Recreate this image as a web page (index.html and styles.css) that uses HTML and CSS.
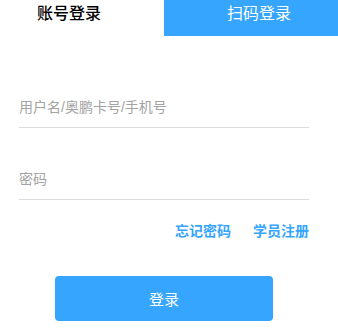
FILE: index.html
```html
<!DOCTYPE html>
<html lang="zh-CN">

<head>
  <meta charset="UTF-8">
  <meta name="viewport" content="width=device-width, initial-scale=1.0">
  <link rel="stylesheet" href="styles.css">
</head>

<body>
  <main class="login">
    <nav class="tabs">
      <a class="tabs__item tabs__item--active">账号登录</a>
      <a class="tabs__item tabs__item--qr">扫码登录</a>
    </nav>

    <form class="form">
      <input class="form__input" type="text" placeholder="用户名/奥鹏卡号/手机号">
      <input class="form__input form__input--pwd" type="password" placeholder="密码">

      <div class="form__links">
        <a class="form__link">忘记密码</a>
        <a class="form__link">学员注册</a>
      </div>

      <button class="form__submit" type="button">登录</button>
    </form>
  </main>
</body>

</html>
```

FILE: styles.css
```css
* {
  box-sizing: border-box;
}

body {
  margin: 0;
  background-color: #fff;
  font-family: "Liberation Sans", "Noto Sans CJK SC", sans-serif;
}

.login {
  width: 338px;
}

.tabs {
  display: flex;
  height: 36px;
}

.tabs__item {
  display: block;
  padding-top: 2px;
  font-size: 16px;
  line-height: 24px;
}

.tabs__item--active {
  width: 164px;
  padding-left: 37px;
  color: #000;
  font-weight: 500;
}

.tabs__item--qr {
  flex: 1;
  padding-left: 63px;
  background-color: #36a5fe;
  color: #fff;
}

.form {
  display: flex;
  flex-direction: column;
  width: 290px;
  margin: 51px 0 0 19px;
}

.form__input {
  display: block;
  width: 100%;
  height: 41px;
  padding: 0;
  border: none;
  border-bottom: 1px solid #dcdcdc;
  outline: none;
  font-family: inherit;
  font-size: 14px;
  color: #333;
}

.form__input::placeholder {
  color: #a3a3a3;
}

.form__input--pwd {
  margin-top: 31px;
}

.form__links {
  display: flex;
  justify-content: flex-end;
  gap: 22px;
  margin-top: 21px;
  line-height: 20px;
}

.form__link {
  font-size: 14px;
  font-weight: 700;
  color: #36a5fe;
  cursor: pointer;
}

.form__submit {
  align-self: center;
  width: 75%;
  height: 45px;
  margin-top: 35px;
  border: none;
  border-radius: 4px;
  background-color: #36a5fe;
  color: #fff;
  font-family: inherit;
  font-size: 15px;
  cursor: pointer;
}
```
